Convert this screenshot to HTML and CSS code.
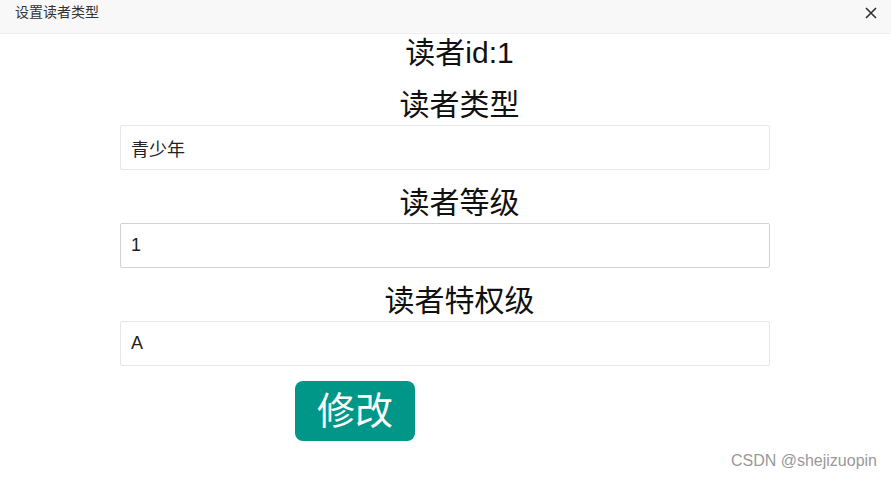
FILE: index.html
```html
<!DOCTYPE html>
<html lang="zh-CN">
<head>
    <meta charset="UTF-8">
    <meta name="viewport" content="width=device-width, initial-scale=1.0">
    <title>设置读者类型</title>
    <link rel="stylesheet" href="styles.css">
</head>
<body>
    <header class="dialog-header">
        <span class="dialog-title">设置读者类型</span>
        <a class="dialog-close" href="#" aria-label="关闭">
            <svg width="12" height="12" viewBox="0 0 12 12">
                <path d="M1 1 L11 11 M11 1 L1 11" stroke="#2f2f2f" stroke-width="1.6" fill="none"/>
            </svg>
        </a>
    </header>
    <main class="dialog-body">
        <div class="field-label first">读者id:1</div>

        <div class="field-label">读者类型</div>
        <input class="field-input" type="text" value="青少年">

        <div class="field-label">读者等级</div>
        <input class="field-input active" type="text" value="1">

        <div class="field-label">读者特权级</div>
        <input class="field-input" type="text" value="A">

        <div class="actions">
            <button class="btn-submit" type="button">修改</button>
        </div>
    </main>
    <div class="watermark">CSDN @shejizuopin</div>
</body>
</html>
```

FILE: styles.css
```css
* {
    margin: 0;
    padding: 0;
    box-sizing: border-box;
    font-family: "Liberation Sans", "Noto Sans CJK SC", Arial, sans-serif;
}

body {
    background-color: #fff;
    color: #333;
    width: 891px;
    height: 481px;
    overflow: hidden;
    position: relative;
}

.dialog-header {
    height: 34px;
    background-color: #f8f8f8;
    border-bottom: 1px solid #eee;
    display: flex;
    justify-content: space-between;
    padding: 0 15px;
    line-height: 24px;
}

.dialog-title {
    font-size: 14px;
    color: #333;
}

.dialog-close {
    display: flex;
    align-items: center;
    height: 26px;
    margin-right: -1px;
}

.dialog-body {
    display: flex;
    flex-direction: column;
    padding: 0 122px 0 120px;
}

.field-label {
    font-size: 30px;
    line-height: 40px;
    height: 40px;
    text-align: center;
    color: #111;
    margin-top: 13px;
    padding-left: 30px;
}

.field-label.first {
    margin-top: -1px;
    margin-bottom: -1px;
}

.field-input {
    height: 45px;
    width: 650px;
    border: 1px solid #e6e6e6;
    border-radius: 2px;
    padding: 0 10px;
    font-size: 18px;
    color: #222;
    background: #fff;
    outline: none;
}

.field-input.active {
    border-color: #d2d2d2;
}

.actions {
    margin-top: 15px;
    padding-left: 175px;
}

.btn-submit {
    width: 120px;
    height: 60px;
    background-color: #009688;
    color: #fff;
    border: none;
    border-radius: 8px;
    font-size: 38px;
    line-height: 60px;
}

.watermark {
    position: absolute;
    right: 14px;
    top: 452px;
    font-size: 16px;
    color: #999;
}
```
